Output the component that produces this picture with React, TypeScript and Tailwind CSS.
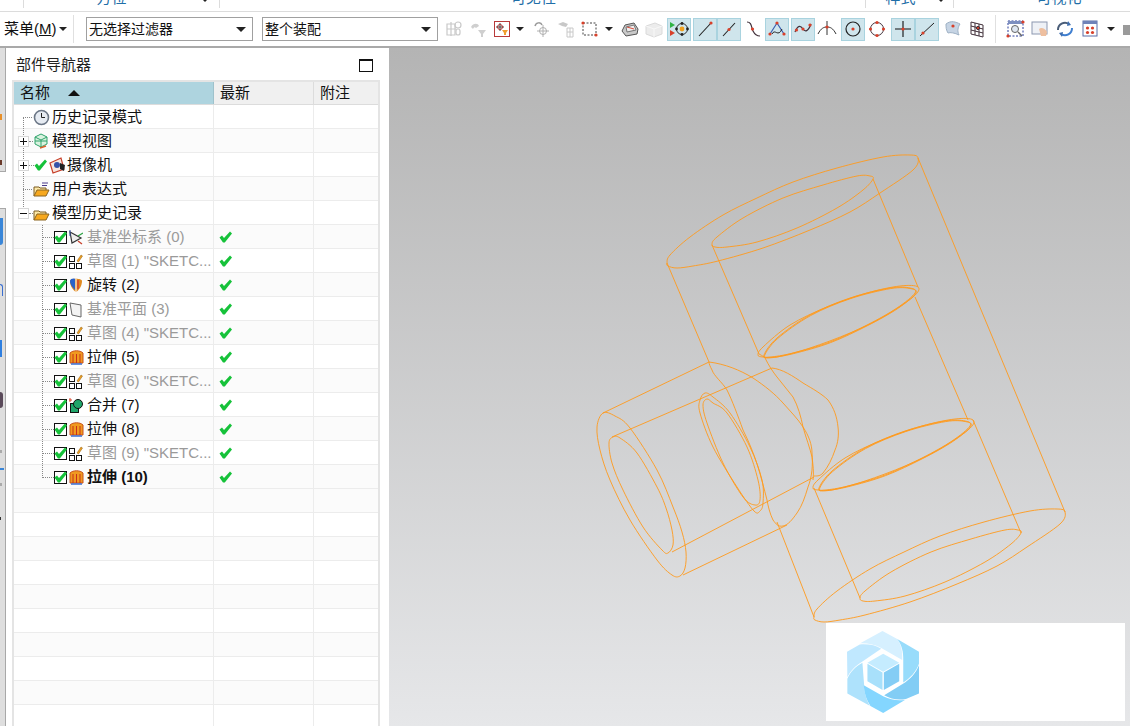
import type { ReactNode } from 'react';

const FONT = { fontFamily: '"Liberation Sans", "Noto Sans CJK SC", sans-serif' };

// toolbar icons, 20x20 box
function Dot({ x, y, r = 1.6, c = '#d8402a' }: { x: number; y: number; r?: number; c?: string }) {
  return <circle cx={x} cy={y} r={r} fill={c} />;
}

type Tool = { node: ReactNode; active?: boolean; caret?: string; space?: string };

const toolbarIcons: Tool[] = [
  {
    node: (
      <g stroke="#c9c9c9" strokeWidth="1.2" fill="none">
        <path d="M3 5v11h8V5zM7 3v14M3 10h9" />
        <circle cx="14" cy="6" r="3" />
        <rect x="12" y="10" width="4" height="6" rx="2" />
      </g>
    ),
  },
  {
    node: (
      <g fill="#cfcfcf">
        <path d="M3 8c2-4 7-4 8-1l-3 2c-1-1-2-1-3 1z" />
        <path d="M10 11h8l-3 4v3h-2v-3z" />
      </g>
    ),
  },
  {
    node: (
      <g>
        <rect x="2.5" y="2.5" width="15" height="15" fill="#fff" stroke="#b83a3a" />
        <path d="M8 4v8M4 8h8" stroke="#444" />
        <circle cx="8" cy="8" r="2.5" fill="none" stroke="#a33" />
        <path d="M10 11h6l-2 3v2h-2v-2z" fill="#f0a030" />
      </g>
    ),
    caret: 'ml-[2px] mr-[6px]',
  },
  {
    node: (
      <g fill="none" stroke="#b0b0b0">
        <path d="M3 7c1-4 6-4 7-1" stroke="#999" strokeWidth="1.5" />
        <circle cx="11" cy="12" r="3.5" />
        <path d="M11 6v12M5 12h12" />
      </g>
    ),
  },
  {
    node: (
      <g fill="#c8c8c8">
        <path d="M2 5l5-2 5 2-2 3-4-1z" />
        <path d="M11 9h6v9h-6z" fill="none" stroke="#c8c8c8" />
        <path d="M14 9v9M11 13h6" stroke="#c8c8c8" />
      </g>
    ),
  },
  {
    node: (
      <g>
        <rect x="3" y="4" width="13" height="12" fill="none" stroke="#444" strokeDasharray="2 1.5" />
        <Dot x={3} y={4} />
        <Dot x={16} y={16} />
      </g>
    ),
    caret: 'ml-[3px] mr-[5px]',
  },
  {
    node: (
      <g>
        <path d="M2 12l3-6 9-2 4 6-1 5-11 2z" fill="#c9c9c9" stroke="#555" />
        <path d="M6 8l8-2 2 5-9 2z" fill="#eee" stroke="#777" />
        <path d="M7 8l7 2" stroke="#d84a3a" />
      </g>
    ),
  },
  {
    node: (
      <g>
        <path d="M2 7l9-3 7 3v8l-8 3-8-3z" fill="#ececec" stroke="#dadada" />
        <path d="M2 7l8 3 8-3M10 10v8" stroke="#f8f8f8" fill="none" />
      </g>
    ),
  },
  {
    active: true,
    space: 'ml-[1px]',
    node: (
      <g>
        <path d="M1 3l5 3-5 3z" fill="#2fb344" />
        <path d="M1 11l5 3-5 3z" fill="#d8402a" />
        <circle cx="13" cy="10" r="5.5" fill="none" stroke="#333" />
        <Dot x={13} y={10} r={2.4} c="#f0a020" />
        <Dot x={13} y={4.5} r={1.4} c="#222" />
        <Dot x={13} y={15.5} r={1.4} c="#222" />
        <Dot x={7.5} y={10} r={1.4} c="#222" />
        <Dot x={18.5} y={10} r={1.4} c="#222" />
      </g>
    ),
  },
  {
    active: true,
    space: 'ml-[2px]',
    node: (
      <g>
        <path d="M4 17L16 4" stroke="#222" strokeWidth="1.1" />
        <Dot x={16} y={4} />
      </g>
    ),
  },
  {
    active: true,
    node: (
      <g>
        <path d="M4 17L16 4" stroke="#222" strokeWidth="1.1" />
        <Dot x={10} y={10.5} />
      </g>
    ),
  },
  {
    node: (
      <g>
        <path d="M4 3c5 0 4 5 6 9s4 5 7 5" fill="none" stroke="#40303a" strokeWidth="1.2" />
        <Dot x={9.5} y={10} />
      </g>
    ),
  },
  {
    active: true,
    node: (
      <g>
        <path d="M3 15L10 4l7 11" fill="none" stroke="#3a5fb0" strokeWidth="1.2" />
        <path d="M5 15c3-6 6 4 10-5" fill="none" stroke="#222" />
        <Dot x={10} y={4} />
        <Dot x={3} y={15} />
        <Dot x={17} y={15} />
      </g>
    ),
  },
  {
    active: true,
    space: 'ml-[2px]',
    node: (
      <g>
        <path d="M2 13c3-8 6-6 8-3s5 3 8-5" fill="none" stroke="#40303a" strokeWidth="1.2" />
        <Dot x={3.5} y={11} />
        <Dot x={10} y={10} />
        <Dot x={17} y={6} />
      </g>
    ),
  },
  {
    node: (
      <g>
        <path d="M1 15c3-6 6-7 9-7s6 1 9 7" fill="none" stroke="#333" />
        <path d="M10 2v14" stroke="#333" />
        <Dot x={10} y={8} />
      </g>
    ),
  },
  {
    active: true,
    space: 'ml-[2px]',
    node: (
      <g>
        <circle cx="10" cy="10" r="7" fill="none" stroke="#222" strokeWidth="1.2" />
        <Dot x={10} y={10} />
      </g>
    ),
  },
  {
    node: (
      <g>
        <circle cx="10" cy="10" r="6.5" fill="none" stroke="#40303a" />
        <Dot x={10} y={3.5} />
        <Dot x={10} y={16.5} />
        <Dot x={3.5} y={10} />
        <Dot x={16.5} y={10} />
      </g>
    ),
  },
  {
    active: true,
    space: 'ml-[2px]',
    node: (
      <g>
        <path d="M10 2v16M2 10h16" stroke="#111" strokeWidth="1.1" />
        <Dot x={10} y={10} />
      </g>
    ),
  },
  {
    active: true,
    node: (
      <g>
        <path d="M3 17L17 4" stroke="#222" />
        <Dot x={6} y={14} />
      </g>
    ),
  },
  {
    space: 'ml-[2px]',
    node: (
      <g>
        <path d="M3 5c5-4 10-2 14 0-2 3-3 7-1 11-4-2-9-3-11-2-2-3-2-6-2-9z" fill="#c6d4e4" stroke="#9db0c4" />
        <Dot x={10} y={7} />
      </g>
    ),
  },
  {
    node: (
      <g stroke="#40303a" fill="none">
        <path d="M4 3l12 3v12L4 15zM8 4v12M12 5v12M4 7l12 3M4 11l12 3" />
        <Dot x={11} y={9} />
      </g>
    ),
  },
];

const viewIcons: Tool[] = [
  {
    node: (
      <g>
        <rect x="3" y="2" width="15" height="15" fill="#fff" stroke="#2a3f9c" strokeDasharray="2 1.5" />
        <rect x="3" y="2" width="15" height="3" fill="#7d8fc0" />
        <circle cx="10" cy="10" r="3.5" fill="#dfe7f2" stroke="#666" />
        <path d="M13 13l4 4" stroke="#666" strokeWidth="1.5" />
        <Dot x={3} y={17} />
        <Dot x={18} y={3} />
      </g>
    ),
  },
  {
    space: 'ml-[1px]',
    node: (
      <g>
        <rect x="2" y="3" width="15" height="12" fill="#eef1f6" stroke="#8c97b0" />
        <path d="M9 10c2-2 6-1 8 3l-1 4H11z" fill="#eebf9f" />
      </g>
    ),
  },
  {
    space: 'ml-[1px]',
    node: (
      <g fill="none" strokeWidth="2">
        <path d="M3 11a7 7 0 0 1 11-6" stroke="#4a5d78" />
        <path d="M17 9a7 7 0 0 1-11 6" stroke="#3f7fd0" />
        <path d="M13 2l3 4-4 1zM7 18l-3-4 4-1z" fill="#3f6fb0" stroke="none" />
      </g>
    ),
  },
  {
    space: 'ml-[1px]',
    node: (
      <g>
        <rect x="3" y="2" width="14" height="15" fill="#fff" stroke="#5a6ea8" />
        <rect x="3" y="2" width="14" height="3" fill="#6f82b8" />
        <Dot x={7.5} y={9} />
        <Dot x={12.5} y={9} />
        <Dot x={7.5} y={13.5} />
        <Dot x={12.5} y={13.5} />
      </g>
    ),
    caret: 'ml-[5px] mr-[4px]',
  },
  {
    node: <path d="M2 6h16v10H2z" fill="#9a9a9a" />,
  },
];

function Caret({ className }: { className: string }) {
  return <div className={`h-0 w-0 border-x-[4px] border-t-[4px] border-x-transparent border-t-[#222] ${className}`} />;
}

function ToolIcon({ node, active, caret, space }: Tool) {
  return (
    <>
      <div
        className={`flex h-[23px] w-[24px] shrink-0 items-center justify-center border ${
          active ? 'border-[#a9d3df] bg-[#cfe5ec]' : 'border-transparent'
        } ${space ?? ''}`}
      >
        <svg width="20" height="20" viewBox="0 0 20 20">
          {node}
        </svg>
      </div>
      {caret && <Caret className={`shrink-0 ${caret}`} />}
    </>
  );
}

function Select({ label, width }: { label: string; width: string }) {
  return (
    <div className={`flex h-[24px] shrink-0 items-center justify-between border border-[#a0a0a0] bg-white pl-[2px] pr-[6px] text-[14px] text-[#111] ${width}`}>
      <span>{label}</span>
      <div className="h-0 w-0 border-x-[5px] border-t-[5px] border-x-transparent border-t-[#222]" />
    </div>
  );
}

// feature tree
function TreeGlyph({ kind }: { kind: string }) {
  if (kind === 'clock')
    return (
      <svg width="17" height="17" viewBox="0 0 17 17">
        <circle cx="8.5" cy="8.5" r="7" fill="#e6ebf2" stroke="#6b7686" strokeWidth="1.6" />
        <path d="M8.5 4v4.5H12" stroke="#222" fill="none" />
      </svg>
    );
  if (kind === 'views')
    return (
      <svg width="17" height="17" viewBox="0 0 17 17">
        <path d="M8 1l6 3v7l-6 3-6-3V4z" fill="#d9f2df" stroke="#2fa36b" />
        <path d="M2 4l6 3 6-3M8 7v7M2 8h12" stroke="#2fa36b" fill="none" />
        <path d="M7 15l6-2" stroke="#d8602a" strokeWidth="1.4" />
      </svg>
    );
  if (kind === 'camera')
    return (
      <svg width="17" height="17" viewBox="0 0 17 17">
        <path d="M1 6l11-5 3 11-11 4z" fill="#f7e6de" stroke="#c8402a" strokeWidth="1.2" />
        <circle cx="8" cy="8" r="3" fill="#3552a8" />
        <path d="M11 6l5 2-1 6-4-2z" fill="#222" />
      </svg>
    );
  if (kind === 'expr' || kind === 'folder')
    return (
      <svg width="17" height="17" viewBox="0 0 17 17">
        {kind === 'expr' && <path d="M9 2h6M9 4.5h5" stroke="#4a3a8a" />}
        <path d="M1 15V6h5l1 1h6v2" fill="#fde9a8" stroke="#7a5a20" />
        <path d="M1 15l3-6h12l-3 6z" fill="#f7a81e" stroke="#8a6420" />
      </svg>
    );
  if (kind === 'csys')
    return (
      <svg width="14" height="17" viewBox="0 0 14 17">
        <path d="M1 3l11 6-9 5z" fill="#eee" stroke="#333" strokeWidth="1.2" />
        <path d="M1 1v6" stroke="#3552a8" />
        <path d="M9 7l5-3" stroke="#2fa344" strokeWidth="1.3" />
        <path d="M9 12l4 3" stroke="#c8402a" strokeWidth="1.3" />
      </svg>
    );
  if (kind === 'sketch')
    return (
      <svg width="14" height="17" viewBox="0 0 14 17">
        <rect x="0.5" y="3.5" width="5" height="5" fill="#fff" stroke="#111" />
        <rect x="0.5" y="10.5" width="5" height="5" fill="#fff" stroke="#111" />
        <rect x="7.5" y="10.5" width="5" height="5" fill="#fff" stroke="#111" />
        <path d="M8 8l4-6 1.5 1-4 6z" fill="#f0a020" stroke="#8a5a10" strokeWidth="0.5" />
      </svg>
    );
  if (kind === 'revolve')
    return (
      <svg width="14" height="17" viewBox="0 0 14 17">
        <path d="M1 4c0-3 12-3 12 0 0 5-3 9-6 11-3-2-6-6-6-11z" fill="#e08a20" />
        <path d="M1 4c0-3 5-3 5-2v11C4 11 1 8 1 4z" fill="#2a62c8" />
        <path d="M7 2v13" stroke="#fff" />
        <path d="M9 3v9" stroke="#d8402a" strokeWidth="1.5" />
      </svg>
    );
  if (kind === 'plane')
    return (
      <svg width="14" height="17" viewBox="0 0 14 17">
        <path d="M1 2l11 2v12l-9-2z" fill="#f3f3f3" stroke="#666" />
      </svg>
    );
  if (kind === 'extrude')
    return (
      <svg width="15" height="17" viewBox="0 0 15 17">
        <path d="M1 4c3-3 10-3 13 0v10H1z" fill="#f09a20" stroke="#c8501a" />
        <path d="M4 5v9M7.5 5v9M11 5v9" stroke="#c8301a" />
        <path d="M2 15h11" stroke="#3a6ed0" strokeWidth="1.5" />
      </svg>
    );
  // unite
  return (
    <svg width="14" height="17" viewBox="0 0 14 17">
      <path d="M1 1v4M-1 3h4" stroke="#d8402a" />
      <rect x="1.5" y="6.5" width="8" height="9" fill="#1fa66a" stroke="#111" />
      <circle cx="9" cy="7" r="4.5" fill="#1fa66a" stroke="#111" />
    </svg>
  );
}

function GreenCheck({ className = '' }: { className?: string }) {
  return (
    <svg width="13" height="12" viewBox="0 0 13 12" className={className}>
      <path d="M0.5 6.5L3 4.5l2 2.5L11 0.5l2 2L5.8 11.5H4z" fill="#16c23a" />
    </svg>
  );
}

function Checkbox() {
  return (
    <div className="flex h-[13px] w-[13px] shrink-0 items-center justify-center overflow-visible border border-[#111] bg-white">
      <GreenCheck className="shrink-0" />
    </div>
  );
}

type Feature = { icon: string; label: string; grey?: boolean; bold?: boolean };

const features: Feature[] = [
  { icon: 'csys', label: '基准坐标系 (0)', grey: true },
  { icon: 'sketch', label: '草图 (1) "SKETC...', grey: true },
  { icon: 'revolve', label: '旋转 (2)' },
  { icon: 'plane', label: '基准平面 (3)', grey: true },
  { icon: 'sketch', label: '草图 (4) "SKETC...', grey: true },
  { icon: 'extrude', label: '拉伸 (5)' },
  { icon: 'sketch', label: '草图 (6) "SKETC...', grey: true },
  { icon: 'unite', label: '合并 (7)' },
  { icon: 'extrude', label: '拉伸 (8)' },
  { icon: 'sketch', label: '草图 (9) "SKETC...', grey: true },
  { icon: 'extrude', label: '拉伸 (10)', bold: true },
];

function Row({ children, latest, odd }: { children?: ReactNode; latest?: boolean; odd?: boolean }) {
  return (
    <div className={`flex h-[24px] shrink-0 border-b border-[#ececec] ${odd ? 'bg-[#fbfbfb]' : 'bg-white'}`}>
      <div className="flex w-[200px] shrink-0 items-center border-r border-[#ececec] pt-[1px]">{children}</div>
      <div className="flex w-[100px] shrink-0 items-center border-r border-[#ececec] pl-[5px] pt-[1px]">
        {latest && <GreenCheck />}
      </div>
      <div className="flex-1" />
    </div>
  );
}

function Expander({ sign }: { sign: '+' | '-' }) {
  return (
    <div className="relative z-10 ml-[5px] mr-[1px] flex h-[9px] w-[9px] shrink-0 items-center justify-center bg-white outline outline-[#d8d8d8]">
      <div className="absolute h-px w-[7px] bg-[#111]" />
      {sign === '+' && <div className="absolute h-[7px] w-px bg-[#111]" />}
    </div>
  );
}

function Dots({ className }: { className: string }) {
  return <div className={`shrink-0 border-t border-dotted border-[#888] ${className}`} />;
}

// closed smooth curve through traced outline points
function smooth(pts: number[][]) {
  const n = pts.length;
  let d = `M${pts[0][0]} ${pts[0][1]}`;
  for (let i = 0; i < n; i++) {
    const p0 = pts[(i - 1 + n) % n];
    const p1 = pts[i];
    const p2 = pts[(i + 1) % n];
    const p3 = pts[(i + 2) % n];
    const c1x = p1[0] + (p2[0] - p0[0]) / 6;
    const c1y = p1[1] + (p2[1] - p0[1]) / 6;
    const c2x = p2[0] - (p3[0] - p1[0]) / 6;
    const c2y = p2[1] - (p3[1] - p1[1]) / 6;
    d += `C${c1x} ${c1y} ${c2x} ${c2y} ${p2[0]} ${p2[1]}`;
  }
  return d + 'Z';
}

const topOuter = smooth([[667, 263], [670, 255], [690, 237], [723, 215], [757, 198], [793, 182], [837, 168], [883, 157], [910, 155], [918, 158], [913, 170], [880, 193], [850, 212], [810, 230], [763, 248], [718, 261], [693, 266], [677, 268], [668, 266]]);
const topInner = smooth([[712, 244], [717, 237], [743, 218], [783, 198], [823, 185], [857, 176], [870, 176], [873, 179], [863, 190], [837, 208], [797, 228], [757, 242], [727, 247], [715, 247]]);
const midOuter = smooth([[758, 355], [763, 347], [790, 325], [827, 307], [867, 293], [900, 286], [918, 287], [913, 297], [883, 317], [850, 333], [810, 348], [777, 357], [763, 357]]);
const midInner = smooth([[764, 355], [777, 338], [810, 315], [850, 298], [890, 288], [910, 288], [915, 293], [897, 308], [867, 325], [830, 342], [793, 353], [770, 357]]);
const bossOuter = smooth([[603, 413], [597, 427], [600, 450], [610, 480], [630, 520], [657, 560], [672, 575], [680, 576], [685, 568], [686, 552], [682, 532], [673, 507], [657, 470], [630, 428], [615, 416]]);
const bossInner = smooth([[613, 437], [609, 443], [612, 463], [623, 490], [643, 527], [662, 550], [668, 553], [673, 545], [672, 530], [666, 508], [657, 487], [637, 453], [620, 438]]);
const boreOuter = smooth([[705, 393], [700, 400], [700, 413], [713, 447], [737, 487], [754, 511], [760, 511], [763, 503], [762, 480], [750, 447], [730, 413], [713, 397]]);
const boreInner = smooth([[707, 399], [703, 405], [707, 423], [723, 463], [743, 497], [755, 505], [760, 500], [758, 480], [747, 447], [727, 413], [713, 403]]);

function Wireframe() {
  return (
    <svg viewBox="389 48 741 678" className="h-full w-full" fill="none" stroke="#ff9a1c" strokeWidth="0.9">
      {/* main cylinder */}
      <path d={topOuter} />
      <path d={topInner} />
      <path d={midOuter} />
      <path d={midInner} />
      <path d={midInner} transform="translate(0.6 0.6)" />
      <g transform="translate(55 133)">
        <path d={midOuter} />
        <path d={midInner} />
        <path d={midInner} transform="translate(0.6 0.6)" />
      </g>
      <path d={topOuter} transform="translate(147 354)" />
      <path d={topInner} transform="translate(148 354)" />
      <path d="M667 263L709 362" />
      <path d="M918 158L1065 512" />
      <path d="M712 245L759 354" />
      <path d="M873 179L918 287" />
      <path d="M915 297L968 420" />
      <path d="M814 488L860 598" />
      <path d="M973 420L1021 533" />
      <path d="M777 522L814 617" />
      {/* side boss */}
      <path d={bossOuter} />
      <path d={bossInner} />
      <path d={boreOuter} />
      <path d={boreInner} />
      <path d="M603 413L709 362" />
      <path d="M612 437L772 368" />
      <path d="M672 552L814 477" />
      <path d="M683 575L787 525" />
      {/* intersection curves */}
      <path d="M709 362C725 364 740 370 753 378C765 386 775 394 783 403C790 411 798 419 803 427C809 436 812 445 812 453C813 465 812 477 808 487C805 497 802 506 797 513C792 520 788 525 783 526C778 527 776 524 773 520C770 514 768 506 767 500C764 488 761 477 758 467C754 454 749 442 743 430C738 416 732 400 727 390C722 382 714 376 712 370C710 366 709 364 709 362" />
      <path d="M759 354C763 356 764 357 765 358C769 366 773 372 777 377C782 384 788 390 793 397C798 406 801 417 803 427C806 438 810 448 812 457C813 465 814 472 813 480" />
      <path d="M772 368C782 369 793 376 803 383C813 389 822 394 828 400C834 408 837 417 838 427C839 435 838 443 835 450C832 459 828 467 823 473C820 476 818 476 814 476" />
    </svg>
  );
}

function Logo() {
  return (
    <svg width="72" height="82" viewBox="82 48 215 245" stroke="none">
      <path d="M120 85L188 48L232 72C245 90 248 112 247 135L187 100C165 88 142 84 120 85Z" fill="#d6f0ff" />
      <path d="M82 110L120 88C145 86 168 90 184 101L128 139C106 152 92 168 83 186Z" fill="#c0e8ff" />
      <path d="M83 191C92 170 108 154 128 143L133 208C133 232 140 254 150 271L83 235Z" fill="#aee2fc" />
      <path d="M132 210L190 243C212 254 234 257 255 254L190 293L152 272C140 254 133 232 132 210Z" fill="#84d6ff" />
      <path d="M193 240L248 206C272 192 288 172 297 150V235L258 251C234 255 212 251 193 240Z" fill="#82cdf5" />
      <path d="M232 72L297 110V146C288 170 272 188 250 202L250 135C251 112 246 90 232 72Z" fill="#98dcfb" />
      <path d="M190 116L238 143L190 170L143 143Z" fill="#c5ecff" />
      <path d="M143 146L188 172V224L143 198Z" fill="#a8e0fb" />
      <path d="M192 172L238 146V198L192 224Z" fill="#84cdf5" />
    </svg>
  );
}

export default function App() {
  return (
    <div className="flex h-[726px] w-[1130px] flex-col overflow-hidden bg-white" style={FONT}>
      {/* ribbon group labels, cut off at the top of the capture */}
      <div className="flex h-[12px] shrink-0 items-start overflow-hidden border-b border-[#dcdcdc] text-[15px] leading-[20px] text-[#1f6fa8]">
        <div className="h-[8px] w-[24px] border-r border-[#dcdcdc]" />
        <div className="relative -mt-[12px] flex h-[20px] w-[196px] justify-center border-r border-[#dcdcdc] pr-[20px]">
          <span>方位</span>
          <Caret className="absolute right-[10px] top-[10px]" />
        </div>
        <div className="-mt-[12px] flex h-[20px] w-[646px] justify-center border-r border-[#dcdcdc] pr-[18px]">
          <span>可见性</span>
        </div>
        <div className="relative -mt-[12px] flex h-[20px] w-[88px] justify-center border-r border-[#dcdcdc] pr-[18px]">
          <span>样式</span>
          <Caret className="absolute right-[8px] top-[10px]" />
        </div>
        <div className="-mt-[12px] flex flex-1 justify-center pl-[34px]">
          <span>可视化</span>
        </div>
      </div>

      {/* toolbar */}
      <div className="flex h-[36px] shrink-0 items-center overflow-hidden border-b-[2px] border-[#a9a9a9] text-[15px] text-[#111]">
        <span className="ml-[4px] w-[52px] shrink-0 whitespace-nowrap">
          菜单(<span className="underline">M</span>)
        </span>
        <Caret className="ml-[3px] shrink-0" />
        <div className="ml-[6px] mr-[12px] h-[28px] w-px shrink-0 bg-[#e0e0e0]" />
        <Select label="无选择过滤器" width="w-[167px]" />
        <div className="w-[9px] shrink-0" />
        <Select label="整个装配" width="w-[176px]" />
        <div className="flex shrink-0 items-center pl-[4px]">
          {toolbarIcons.map((t, i) => (
            <ToolIcon key={i} {...t} />
          ))}
        </div>
        <div className="ml-[6px] mr-[7px] h-[28px] w-px shrink-0 bg-[#e0e0e0]" />
        <div className="flex shrink-0 items-center">
          {viewIcons.map((t, i) => (
            <ToolIcon key={i} {...t} />
          ))}
        </div>
      </div>

      <div className="flex min-h-0 flex-1">
        {/* resource bar sliver, only the edge of its tabs is visible */}
        <div className="relative flex w-[6px] shrink-0 flex-col">
          <div className="h-[124px] border-r border-b border-[#a8a8a8] bg-[#dedede]" />
          <div className="h-[36px] bg-white" />
          <div className="flex-1 border-r border-t border-[#a8a8a8] bg-[#dedede]" />
          <div className="absolute left-0 top-[66px] h-[6px] w-[2px] bg-[#e8902a]" />
          <div className="absolute left-0 top-[112px] h-[5px] w-[2px] bg-[#6a3a2a]" />
          <div className="absolute left-0 top-[170px] h-[27px] w-[3px] rounded-br-[3px] bg-[#3a86d8]" />
          <div className="absolute left-0 top-[236px] h-[12px] w-[3px] rounded-tr-[3px] border-r border-t border-[#3a6ed0]" />
          <div className="absolute left-0 top-[292px] h-[17px] w-[2px] bg-[#2f7fe0]" />
          <div className="absolute left-0 top-[344px] h-[16px] w-[3px] rounded-r-full bg-[#5a4a5a]" />
          <div className="absolute left-0 top-[402px] h-[3px] w-[2px] bg-[#aaaaaa]" />
          <div className="absolute left-0 top-[420px] h-[2px] w-[4px] bg-[#3a86d8]" />
          <div className="absolute left-0 top-[435px] h-[3px] w-[2px] bg-[#aaaaaa]" />
          <div className="absolute left-0 top-[469px] h-[3px] w-[1px] bg-[#333333]" />
        </div>

        {/* part navigator */}
        <div className="flex w-[383px] shrink-0 flex-col bg-white pl-[6px] pr-[9px]">
          <div className="flex h-[32px] shrink-0 items-center justify-between pl-[4px] pr-[7px] pt-[2px] text-[15px] text-[#222]">
            <span>部件导航器</span>
            <div className="h-[13px] w-[14px] border border-[#111] border-t-2" />
          </div>
          <div className="flex min-h-0 flex-1 flex-col border-x-2 border-t-2 border-[#e4e4e4] text-[15px] text-[#111]">
            <div className="flex h-[23px] shrink-0 border-b border-[#dcdcdc] bg-[#f0f0f0]">
              <div className="flex w-[200px] shrink-0 items-center border-r border-[#9fc2cc] bg-[#aed4df] pl-[6px]">
                <span className="w-[48px]">名称</span>
                <div className="h-0 w-0 border-x-[6px] border-b-[6px] border-x-transparent border-b-[#111]" />
              </div>
              <div className="flex w-[100px] shrink-0 items-center border-r border-[#dcdcdc] pl-[6px]">最新</div>
              <div className="flex flex-1 items-center pl-[6px]">附注</div>
            </div>

            <div className="relative flex min-h-0 flex-1 flex-col">
              {/* tree connectors */}
              <div className="absolute left-[9px] top-[12px] h-[96px] border-l border-dotted border-[#888]" />
              <div className="absolute left-[28px] top-[120px] h-[253px] border-l border-dotted border-[#888]" />

              <Row>
                <Dots className="ml-[9px] w-[9px]" />
                <div className="ml-[1px] mr-[2px] flex">
                  <TreeGlyph kind="clock" />
                </div>
                <span>历史记录模式</span>
              </Row>
              <Row odd>
                <Expander sign="+" />
                <Dots className="w-[4px]" />
                <div className="mr-[2px] flex">
                  <TreeGlyph kind="views" />
                </div>
                <span>模型视图</span>
              </Row>
              <Row>
                <Expander sign="+" />
                <Dots className="w-[5px]" />
                <GreenCheck className="shrink-0" />
                <div className="ml-[2px] mr-[1px] flex">
                  <TreeGlyph kind="camera" />
                </div>
                <span>摄像机</span>
              </Row>
              <Row odd>
                <Dots className="ml-[9px] w-[9px]" />
                <div className="ml-[1px] mr-[2px] flex">
                  <TreeGlyph kind="expr" />
                </div>
                <span>用户表达式</span>
              </Row>
              <Row>
                <Expander sign="-" />
                <Dots className="w-[4px]" />
                <div className="mr-[2px] flex">
                  <TreeGlyph kind="folder" />
                </div>
                <span>模型历史记录</span>
              </Row>

              {features.map((f, i) => (
                <Row key={i} latest odd={i % 2 === 0}>
                  <Dots className="ml-[29px] w-[11px]" />
                  <Checkbox />
                  <div className="mx-[1px] flex w-[16px] shrink-0 justify-center">
                    <TreeGlyph kind={f.icon} />
                  </div>
                  <span
                    className={`ml-[2px] whitespace-nowrap ${f.grey ? 'text-[#9a9a9a]' : ''} ${f.bold ? 'font-bold' : ''}`}
                  >
                    {f.label}
                  </span>
                </Row>
              ))}

              {Array.from({ length: 10 }).map((_, i) => (
                <Row key={i} odd={i % 2 === 0} />
              ))}
            </div>
          </div>
        </div>

        {/* graphics window */}
        <div className="relative min-w-0 flex-1 bg-gradient-to-b from-[#b4b4b4] to-[#e6e7e9]">
          <Wireframe />
          <div className="absolute right-[5px] bottom-[5px] flex h-[98px] w-[299px] items-center bg-white pl-[21px]">
            <Logo />
          </div>
        </div>
      </div>
    </div>
  );
}
